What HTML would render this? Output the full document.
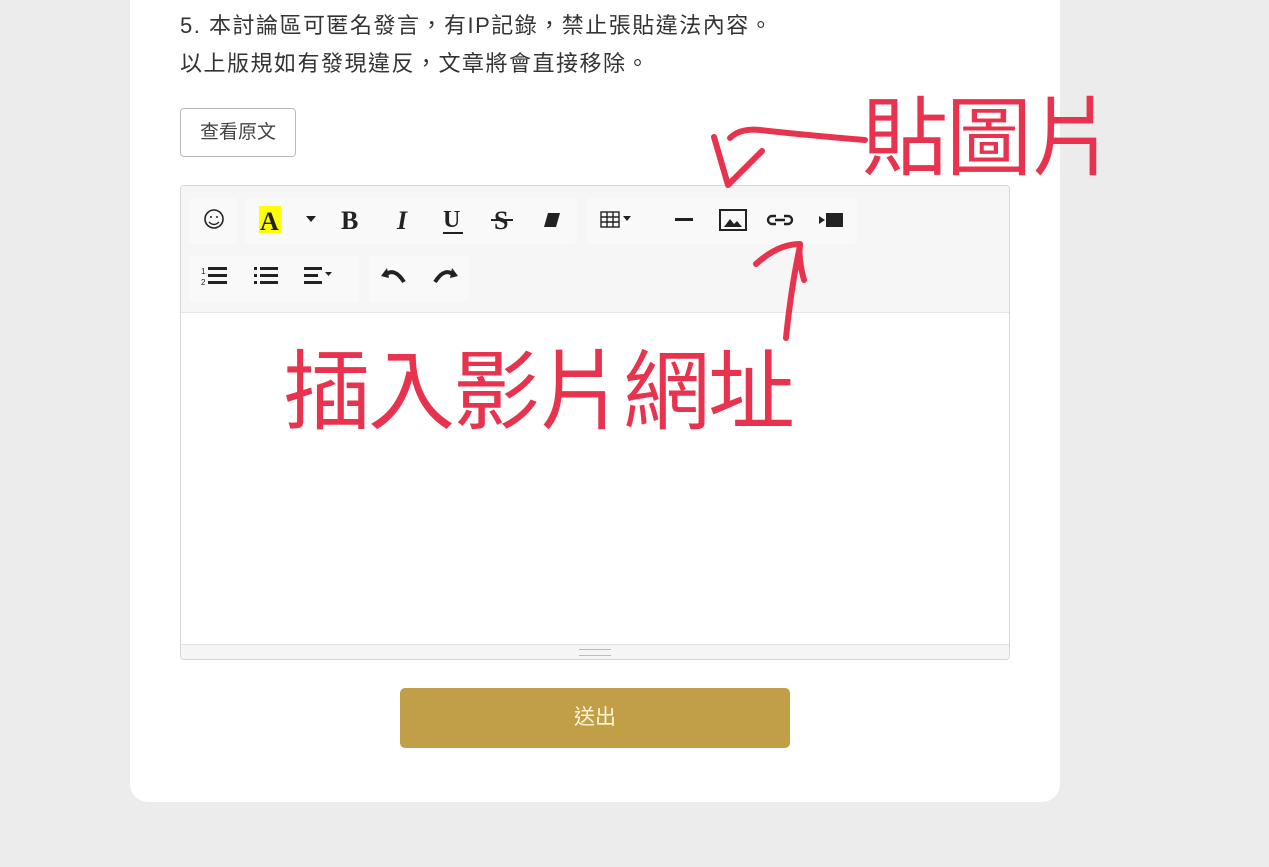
<!DOCTYPE html>
<html><head><meta charset="utf-8"><style>
body{margin:0;width:1269px;height:867px;background:#ececec;position:relative;overflow:hidden;font-family:"Liberation Sans","Noto Sans CJK TC",sans-serif;}
.card{position:absolute;left:130px;top:-30px;width:930px;height:832px;background:#fff;border-radius:18px;}
.t{position:absolute;left:180px;font-size:22px;letter-spacing:1.5px;color:#333;white-space:nowrap;}
.btn1{position:absolute;left:180px;top:108px;width:116px;height:49px;border:1px solid #bbb;border-radius:4px;font-size:19px;color:#444;line-height:47px;text-align:center;box-sizing:border-box;}
.ed{position:absolute;left:180px;top:185px;width:830px;height:475px;border:1px solid #d6d6d6;border-radius:4px;box-sizing:border-box;background:#fff;overflow:hidden;}
.tb{position:absolute;left:0;top:0;width:100%;height:126px;background:#f6f6f6;border-bottom:1px solid #e6e6e6;}
.grp{position:absolute;background:#f9f9f9;border-radius:3px;}
.st{position:absolute;left:0;bottom:0;width:100%;height:14px;background:#f5f5f5;border-top:1px solid #e2e2e2;}
.st i{position:absolute;left:398px;top:4px;width:32px;height:5px;border-top:1px solid #bbb;border-bottom:1px solid #bbb;}
.sub{position:absolute;left:400px;top:688px;width:390px;height:60px;background:#c09f47;border-radius:5px;color:#fff5d5;font-size:21px;text-align:center;line-height:60px;}
.red{position:absolute;color:#e8334f;font-family:"Noto Sans CJK TC",sans-serif;}
</style></head><body>
<div class="card"></div>
<div class="t" style="top:8px">5. 本討論區可匿名發言，有IP記錄，禁止張貼違法內容。</div>
<div class="t" style="top:46px">以上版規如有發現違反，文章將會直接移除。</div>
<div class="btn1">查看原文</div>
<div class="ed">
 <div class="tb">
  <div class="grp" style="left:8px;top:12px;width:48px;height:46px"></div>
  <div class="grp" style="left:64px;top:12px;width:332px;height:46px"></div>
  <div class="grp" style="left:406px;top:12px;width:270px;height:46px"></div>
  <div class="grp" style="left:8px;top:70px;width:170px;height:46px"></div>
  <div class="grp" style="left:188px;top:70px;width:100px;height:46px"></div>
 </div>
 <svg style="position:absolute;left:0;top:0" width="830" height="130" fill="#222" stroke="#222">
  <circle cx="33" cy="33" r="9" fill="none" stroke-width="1.6"/><circle cx="30" cy="31" r="1" stroke="none"/><circle cx="36" cy="31" r="1" stroke="none"/><path d="M28 36q5 5 10 0" fill="none" stroke-width="1.4"/>
  <rect x="78" y="20" width="22" height="27" fill="#ff0" stroke="none"/>
  <text x="79" y="44" font-family="Liberation Serif" font-weight="bold" font-size="26" stroke="none">A</text>
  <path d="M125 30h10l-5 6z" stroke="none"/>
  <text x="160" y="43" font-family="Liberation Serif" font-weight="bold" font-size="26" stroke="none">B</text>
  <text x="216" y="43" font-family="Liberation Serif" font-style="italic" font-weight="bold" font-size="26" stroke="none">I</text>
  <text x="262" y="41" font-family="Liberation Serif" font-weight="bold" font-size="24" stroke="none">U</text><rect x="262" y="46" width="20" height="2" stroke="none"/>
  <text x="313" y="43" font-family="Liberation Serif" font-weight="bold" font-size="26" stroke="none">S</text><rect x="310" y="33" width="22" height="2" stroke="none"/>
  <path d="M367 27h12l-4 14h-12z" stroke="none"/>
  <g fill="none" stroke-width="1.4"><rect x="420" y="26" width="18" height="15"/><path d="M426 26v15M432 26v15M420 31h18M420 36h18"/></g>
  <path d="M442 30h8l-4 5z" stroke="none"/>
  <rect x="494" y="32" width="18" height="3" stroke="none"/>
  <rect x="539" y="24" width="26" height="20" fill="none" stroke-width="2"/><path d="M543 41l6-8 4 5 3-3 5 6z" stroke="none"/>
  <path d="M595 30h-4a4 4 0 0 0 0 8h4M603 30h4a4 4 0 0 1 0 8h-4M594 34h10" fill="none" stroke-width="2.4"/>
  <rect x="645" y="27" width="17" height="14" stroke="none"/><path d="M638 30v8l6-4z" stroke="none"/>
  <g stroke="none"><text x="20" y="88" font-size="8">1</text><text x="20" y="99" font-size="8">2</text><rect x="27" y="81" width="19" height="3"/><rect x="27" y="88" width="19" height="3"/><rect x="27" y="95" width="19" height="3"/>
  <rect x="73" y="81" width="3" height="3"/><rect x="73" y="88" width="3" height="3"/><rect x="73" y="95" width="3" height="3"/><rect x="79" y="81" width="18" height="3"/><rect x="79" y="88" width="18" height="3"/><rect x="79" y="95" width="18" height="3"/>
  <rect x="123" y="81" width="18" height="3"/><rect x="123" y="88" width="14" height="3"/><rect x="123" y="95" width="18" height="3"/><path d="M144 86h7l-3.5 4z"/>
  <path d="M206 82l-6 8 8 2z"/><path d="M203 90q10-10 20 6" fill="none" stroke="#222" stroke-width="4"/>
  <path d="M271 82l6 8-8 2z"/><path d="M274 90q-10-10-20 6" fill="none" stroke="#222" stroke-width="4"/></g>
 </svg>
 <div class="st"><i></i></div>
</div>
<div class="sub">送出</div>
<svg style="position:absolute;left:0;top:0" width="1269" height="867" fill="none" stroke="#e8334f" stroke-width="6" stroke-linecap="round" stroke-linejoin="round">
 <path d="M865 140q-60-5-105-10q-20-2-30 8"/>
 <path d="M714 137l14 48l34-34"/>
 <path d="M786 338q5-50 14-92"/>
 <path d="M756 264q22-20 44-20q-2 14 4 36"/>
</svg>
<div class="red" style="left:862px;top:76px;font-size:86px;line-height:110px;letter-spacing:-2px">貼圖片</div>
<div class="red" style="left:283px;top:330px;font-size:87px;line-height:110px;letter-spacing:-2px">插入影片網址</div>
</body></html>
